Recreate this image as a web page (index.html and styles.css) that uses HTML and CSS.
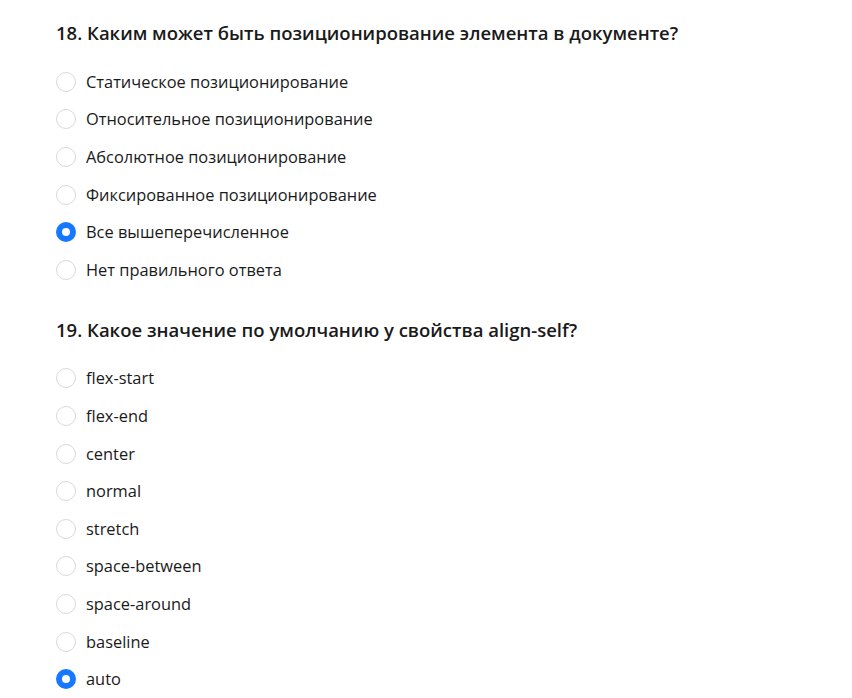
FILE: index.html
```html
<!DOCTYPE html>
<html lang="ru">
<head>
<meta charset="utf-8">
<link rel="stylesheet" href="styles.css">
</head>
<body>
<main class="quiz">
  <section class="question">
    <h2 class="q-title">18. Каким может быть позиционирование элемента в документе?</h2>
    <ul class="options">
      <li class="option"><span class="radio"></span><span class="label">Статическое позиционирование</span></li>
      <li class="option"><span class="radio"></span><span class="label">Относительное позиционирование</span></li>
      <li class="option"><span class="radio"></span><span class="label">Абсолютное позиционирование</span></li>
      <li class="option"><span class="radio"></span><span class="label">Фиксированное позиционирование</span></li>
      <li class="option"><span class="radio checked"></span><span class="label">Все вышеперечисленное</span></li>
      <li class="option"><span class="radio"></span><span class="label">Нет правильного ответа</span></li>
    </ul>
  </section>
  <section class="question">
    <h2 class="q-title">19. Какое значение по умолчанию у свойства align-self?</h2>
    <ul class="options">
      <li class="option"><span class="radio"></span><span class="label">flex-start</span></li>
      <li class="option"><span class="radio"></span><span class="label">flex-end</span></li>
      <li class="option"><span class="radio"></span><span class="label">center</span></li>
      <li class="option"><span class="radio"></span><span class="label">normal</span></li>
      <li class="option"><span class="radio"></span><span class="label">stretch</span></li>
      <li class="option"><span class="radio"></span><span class="label">space-between</span></li>
      <li class="option"><span class="radio"></span><span class="label">space-around</span></li>
      <li class="option"><span class="radio"></span><span class="label">baseline</span></li>
      <li class="option"><span class="radio checked"></span><span class="label">auto</span></li>
    </ul>
  </section>
</main>
</body>
</html>
```
FILE: styles.css
```css
html, body {
  margin: 0;
  padding: 0;
  background: #ffffff;
}
body {
  font-family: "Open Sans", "Noto Sans", sans-serif;
  color: #1a1a1a;
}
.quiz {
  padding: 20px 56px 0 56px;
  display: flex;
  flex-direction: column;
  gap: 28px;
}
.q-title {
  margin: 0;
  font-size: 18.5px;
  font-weight: 600;
  line-height: 26px;
  color: #1a1a1a;
}
.options {
  list-style: none;
  margin: 17px 0 0 0;
  padding: 0;
  display: flex;
  flex-direction: column;
}
.option {
  display: flex;
  align-items: center;
  gap: 10px;
  height: 37.6px;
  font-size: 16.4px;
}
.radio {
  box-sizing: border-box;
  width: 20px;
  height: 20px;
  border-radius: 50%;
  border: 1px solid #d9d9d9;
  background: #fff;
  flex: none;
}
.radio.checked {
  border: 6px solid #1677ff;
  background: #fff;
}
.label {
  line-height: 24px;
}
```
